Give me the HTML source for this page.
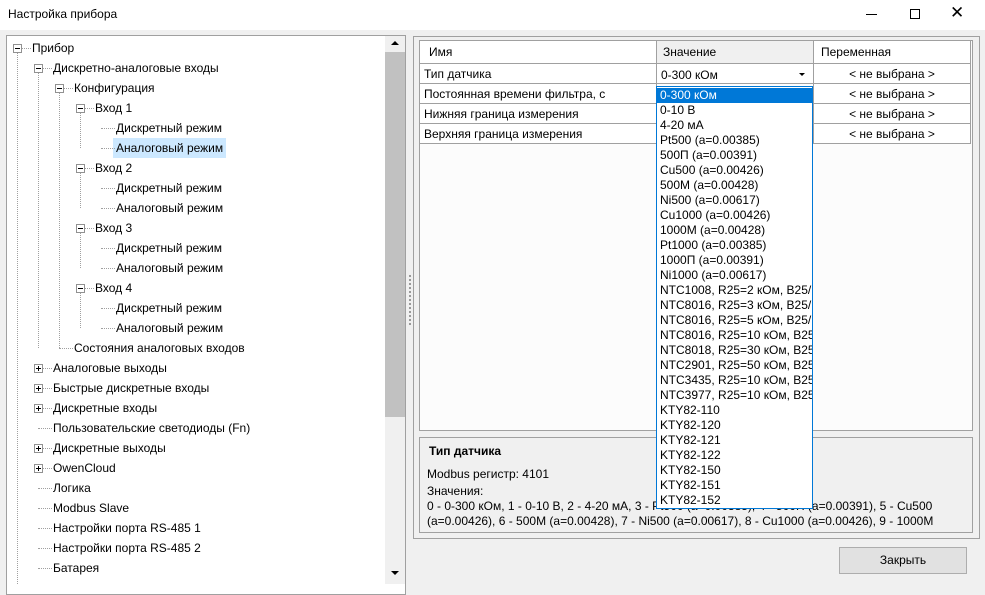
<!DOCTYPE html>
<html><head><meta charset="utf-8"><style>
*{box-sizing:border-box;margin:0;padding:0}
body{width:985px;height:584px;overflow:hidden;background:#f0f0f0;font-family:"Liberation Sans",sans-serif;font-size:12px;color:#000;position:relative}
.a{position:absolute;white-space:nowrap}
.t{position:absolute;white-space:nowrap;line-height:20px;height:20px}
.bx{position:absolute;width:9px;height:9px;border:1px solid #919191;background:#fff}
.bx:before{content:"";position:absolute;left:1px;top:3px;width:5px;height:1px;background:#000}
.bx.p:after{content:"";position:absolute;left:3px;top:1px;width:1px;height:5px;background:#000}
.vl{position:absolute;border-left:1px dotted #a0a0a0;width:0}
.hl{position:absolute;border-top:1px dotted #a0a0a0;height:0}
.cell{position:absolute;height:20px;line-height:20px;border-right:1px solid #a0a0a0;border-bottom:1px solid #a0a0a0;padding-left:4px;white-space:nowrap}
.dd div{height:15px;line-height:15px;padding-left:3px}
</style></head><body>
<div class="a" style="left:0;top:0;width:985px;height:30px;background:#fff"></div>
<div class="a" style="left:8px;top:7px;font-size:12px">Настройка прибора</div>
<div class="a" style="left:866px;top:14px;width:11px;height:1px;background:#000"></div>
<div class="a" style="left:910px;top:9px;width:10px;height:10px;border:1px solid #000"></div>
<div class="a" style="left:950px;top:3px;font-size:17px;line-height:20px">✕</div>

<div class="a" style="left:6px;top:35px;width:400px;height:560px;border:1px solid #a0a0a0;background:#fff"></div>
<div class="a" style="left:385px;top:36px;width:20px;height:548px;background:#f0f0f0"></div>
<div class="a" style="left:385px;top:52px;width:20px;height:365px;background:#c1c1c1"></div>
<div class="a" style="left:391px;top:41px;width:0;height:0;border-left:4px solid transparent;border-right:4px solid transparent;border-bottom:4px solid #000"></div>
<div class="a" style="left:391px;top:571px;width:0;height:0;border-left:4px solid transparent;border-right:4px solid transparent;border-top:4px solid #000"></div>
<div class="a" style="left:409px;top:275px;width:2px;height:50px;border-left:2px dotted #999"></div>

<div class="vl" style="left:17px;top:53px;height:531px"></div>
<div class="vl" style="left:38px;top:73px;height:275px"></div>
<div class="vl" style="left:59px;top:93px;height:255px"></div>
<div class="vl" style="left:80px;top:113px;height:35px"></div>
<div class="vl" style="left:80px;top:173px;height:35px"></div>
<div class="vl" style="left:80px;top:233px;height:35px"></div>
<div class="vl" style="left:80px;top:293px;height:35px"></div>

<div class="a" style="left:113px;top:138px;width:113px;height:20px;background:#cce8ff"></div>
<div id="tree"></div>

<div class="a" style="left:413px;top:36px;width:567px;height:503px;border:1px solid #a0a0a0"></div>
<div class="a" style="left:419px;top:40px;width:554px;height:391px;border:1px solid #a0a0a0;background:#fcfcfc"></div>
<div class="cell" style="left:420px;top:41px;width:237px;height:23px;line-height:23px;background:#fff;padding-left:9px">Имя</div>
<div class="cell" style="left:657px;top:41px;width:157px;height:23px;line-height:23px;background:#f0f0f0;padding-left:6px">Значение</div>
<div class="cell" style="left:814px;top:41px;width:157px;height:23px;line-height:23px;background:#fff;padding-left:7px">Переменная</div>
<div class="cell" style="left:420px;top:64px;width:237px;background:#fff">Тип датчика</div>
<div class="cell" style="left:657px;top:64px;width:157px;background:#fff;line-height:22px">0-300 кОм</div>
<div class="a" style="left:799px;top:73px;border-left:3px solid transparent;border-right:3px solid transparent;border-top:3px solid #000"></div>
<div class="cell" style="left:814px;top:64px;width:157px;background:#fff;text-align:center;padding:0">&lt; не выбрана &gt;</div>
<div class="cell" style="left:420px;top:84px;width:237px;background:#fff">Постоянная времени фильтра, с</div>
<div class="cell" style="left:657px;top:84px;width:157px;background:#fff"></div>
<div class="cell" style="left:814px;top:84px;width:157px;background:#fff;text-align:center;padding:0">&lt; не выбрана &gt;</div>
<div class="cell" style="left:420px;top:104px;width:237px;background:#fff">Нижняя граница измерения</div>
<div class="cell" style="left:657px;top:104px;width:157px;background:#fff"></div>
<div class="cell" style="left:814px;top:104px;width:157px;background:#fff;text-align:center;padding:0">&lt; не выбрана &gt;</div>
<div class="cell" style="left:420px;top:124px;width:237px;background:#fff">Верхняя граница измерения</div>
<div class="cell" style="left:657px;top:124px;width:157px;background:#fff"></div>
<div class="cell" style="left:814px;top:124px;width:157px;background:#fff;text-align:center;padding:0">&lt; не выбрана &gt;</div>

<div class="a" style="left:419px;top:437px;width:554px;height:96px;border:1px solid #a0a0a0"></div>
<div class="a" style="left:429px;top:444px;font-weight:bold">Тип датчика</div>
<div class="a" style="left:427px;top:467px">Modbus регистр: 4101</div>
<div class="a" style="left:427px;top:484px">Значения:</div>
<div class="a" style="left:427px;top:499px">0 - 0-300 кОм, 1 - 0-10 В, 2 - 4-20 мА, 3 - Pt500 (a=0.00385), 4 - 500П (a=0.00391), 5 - Cu500</div>
<div class="a" style="left:427px;top:514px">(a=0.00426), 6 - 500M (a=0.00428), 7 - Ni500 (a=0.00617), 8 - Cu1000 (a=0.00426), 9 - 1000M</div>

<div class="a" style="left:839px;top:547px;width:128px;height:27px;border:1px solid #adadad;background:#e1e1e1;text-align:center;line-height:25px">Закрыть</div>

<div class="a dd" style="left:656px;top:86px;width:157px;height:423px;border:1px solid #0078d7;background:#fff;padding-top:1px">
<div style="background:#0078d7;color:#fff">0-300 кОм</div><div>0-10 В</div><div>4-20 мА</div><div>Pt500 (a=0.00385)</div><div>500П (a=0.00391)</div><div>Cu500 (a=0.00426)</div><div>500M (a=0.00428)</div><div>Ni500 (a=0.00617)</div><div>Cu1000 (a=0.00426)</div><div>1000M (a=0.00428)</div><div>Pt1000 (a=0.00385)</div><div>1000П (a=0.00391)</div><div>Ni1000 (a=0.00617)</div><div style="overflow:hidden">NTC1008, R25=2 кОм, B25/100</div><div style="overflow:hidden">NTC8016, R25=3 кОм, B25/100</div><div style="overflow:hidden">NTC8016, R25=5 кОм, B25/100</div><div style="overflow:hidden">NTC8016, R25=10 кОм, B25/100</div><div style="overflow:hidden">NTC8018, R25=30 кОм, B25/100</div><div style="overflow:hidden">NTC2901, R25=50 кОм, B25/100</div><div style="overflow:hidden">NTC3435, R25=10 кОм, B25/85</div><div style="overflow:hidden">NTC3977, R25=10 кОм, B25/85</div><div>KTY82-110</div><div>KTY82-120</div><div>KTY82-121</div><div>KTY82-122</div><div>KTY82-150</div><div>KTY82-151</div><div>KTY82-152</div>
</div>

<script>
var items=[[0,'Прибор',1],[1,'Дискретно-аналоговые входы',1],[2,'Конфигурация',1],[3,'Вход 1',1],[4,'Дискретный режим',0],[4,'Аналоговый режим',0],[3,'Вход 2',1],[4,'Дискретный режим',0],[4,'Аналоговый режим',0],[3,'Вход 3',1],[4,'Дискретный режим',0],[4,'Аналоговый режим',0],[3,'Вход 4',1],[4,'Дискретный режим',0],[4,'Аналоговый режим',0],[2,'Состояния аналоговых входов',0],[1,'Аналоговые выходы',2],[1,'Быстрые дискретные входы',2],[1,'Дискретные входы',2],[1,'Пользовательские светодиоды (Fn)',0],[1,'Дискретные выходы',2],[1,'OwenCloud',2],[1,'Логика',0],[1,'Modbus Slave',0],[1,'Настройки порта RS-485 1',0],[1,'Настройки порта RS-485 2',0],[1,'Батарея',0]];
var h='';items.forEach(function(it,i){var y=38+i*20,l=it[0],bx=13+21*l,tx=32+21*l;
if(it[2]){h+='<div class="bx'+(it[2]==2?' p':'')+'" style="left:'+bx+'px;top:'+(y+6)+'px"></div><div class="hl" style="left:'+(bx+9)+'px;top:'+(y+10)+'px;width:'+(tx-bx-10)+'px"></div>';}
else{h+='<div class="hl" style="left:'+(bx+4)+'px;top:'+(y+10)+'px;width:'+(tx-bx-5)+'px"></div>';}
h+='<div class="t" style="left:'+tx+'px;top:'+y+'px">'+it[1]+'</div>';});
document.getElementById('tree').innerHTML=h;
</script>
</body></html>
